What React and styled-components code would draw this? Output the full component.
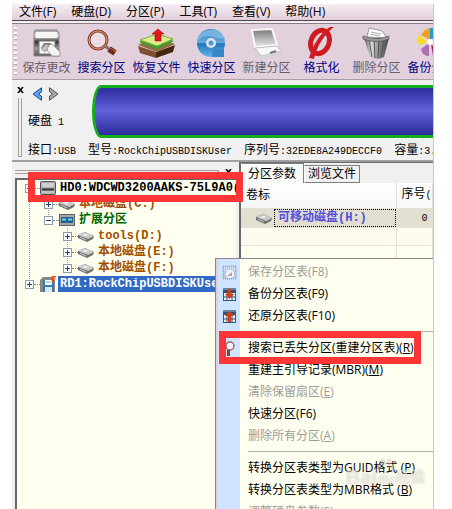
import React, { useState } from 'react'
import styled, { createGlobalStyle, css } from 'styled-components'

const GlobalStyle = createGlobalStyle`
    * { box-sizing: border-box; }
    body {
        margin: 0;
        background: #fff;
        overflow: hidden;
    }
    button {
        border: none;
        background: none;
        padding: 0;
        margin: 0;
        font: inherit;
        color: inherit;
    }
`

const uiFont = '"Open Sans", "Noto Sans CJK SC", sans-serif'
const monoFont = '"Liberation Mono", "Noto Sans CJK SC", monospace'

const Page = styled.div`
    height: 100vh;
    padding: 4px 18px 0 12px;
    font-family: ${uiFont};
    font-size: 12px;
    line-height: 16px;
    color: #000;
`

const Window = styled.main`
    position: relative;
    height: 100%;
    display: flex;
    flex-direction: column;
    overflow: hidden;
    background: #f0f0f0;
    border-right: 1px solid #c8c8c8;
`

const MenuBar = styled.nav`
    display: flex;
    height: 17px;
    flex: none;
    background: linear-gradient(to bottom, #f6eef3, #e2cdda);
    border-bottom: 1px solid #54404c;
`

const MenuButton = styled.button`
    padding: 0 8px 0 7px;
    line-height: 16px;
    white-space: nowrap;
`

const Toolbar = styled.div`
    display: flex;
    flex: none;
    margin-top: 2px;
    height: 57px;
    background: #e2d0dc;
    border-top: 1px solid #8c7c86;
    border-bottom: 1px solid #a8a0a4;
    overflow: hidden;
`

const ToolbarGrip = styled.div`
    width: 3px;
    margin: 3px 2px;
    flex: none;
    background: repeating-linear-gradient(to bottom, #fff 0 2px, #b8a8b2 2px 3px, transparent 3px 5px);
`

const ToolButton = styled.button`
    width: 55px;
    flex: none;
    display: flex;
    flex-direction: column;
    align-items: center;
    padding-top: 3px;
    white-space: nowrap;
    color: ${p => p.disabled ? '#66606a' : '#00007c'};

    svg { flex: none; }
`

const DiskPanel = styled.section`
    display: flex;
    flex: none;
    height: 82px;
    padding-top: 5px;
    border-bottom: 2px solid #a0a0a0;
    overflow: hidden;
`

const PanelGrip = styled.div`
    width: 16px;
    flex: none;
    display: flex;
    flex-direction: column;
    align-items: center;
    gap: 5px;
    padding: 2px 0 3px;
`

const GripBars = styled.div`
    flex: 1;
    width: 4px;
    border: 1px solid #a0a0a0;
    border-top: none;
`

const DiskBody = styled.div`
    flex: 1;
    min-width: 0;
    display: flex;
    flex-direction: column;
`

const DiskTop = styled.div`
    display: flex;
    height: 54px;
`

const DiskNav = styled.div`
    width: 64px;
    flex: none;
    display: flex;
    flex-direction: column;
    justify-content: space-between;
    padding: 2px 0 7px;
`

const Arrows = styled.div`
    display: flex;
    gap: 5px;
    padding-left: 4px;

    button { display: flex; }
`

const Cylinder = styled.div`
    flex: 1;
    border: 3px solid #16ac20;
    border-right: none;
    border-radius: 9px 0 0 9px / 27px 0 0 27px;
    background: linear-gradient(to bottom, #2c2c9c, #6262da 48%, #2c2c9c);
`

const DiskInfo = styled.div`
    display: flex;
    gap: 12px;
    padding-top: 4px;
    white-space: nowrap;
`

const Narrow = styled.span`
    font-family: ${monoFont};
    font-size: 10px;
`

const Lower = styled.div`
    flex: 1;
    min-height: 0;
    display: flex;
`

const TreePanel = styled.aside`
    width: 227px;
    flex: none;
    display: flex;
    flex-direction: column;
    padding: 3px 3px 0;
`

const TreeHeader = styled.div`
    display: flex;
    align-items: center;
    gap: 6px;
    height: 13px;
    padding-right: 4px;
`

const TreeBars = styled.div`
    flex: 1;
    height: 4px;
    border: 1px solid #a0a0a0;
    border-left: none;
`

const Tree = styled.ul`
    flex: 1;
    margin: 0;
    padding: 0 0 0 8px;
    list-style: none;
    background: #fffff0;
    border-top: 2px solid #696969;
    border-left: 2px solid #696969;
    overflow: hidden;
    font-family: ${monoFont};
    font-weight: bold;
`

const TreeRow = styled.li`
    display: flex;
    align-items: center;
    height: 16px;
    color: ${p => p.$color};
    white-space: nowrap;

    svg { flex: none; }
`

const dottedLine = css`
    background-image: repeating-linear-gradient(to bottom, #909090 0 1px, transparent 1px 2px);
    background-repeat: no-repeat;
    background-position: 4px 0;
`

const Guide = styled.span`
    width: 19px;
    height: 16px;
    flex: none;
    ${p => p.$line && css`
        ${dottedLine}
        background-size: 1px 100%;
    `}
`

const Toggle = styled.button`
    display: flex;
    align-items: center;
    height: 16px;
    ${dottedLine}
    background-size: 1px ${p => p.$last ? '50%' : '100%'};
`

const Dots = styled.span`
    width: 6px;
    flex: none;
    border-top: 1px dotted #808080;
`

const TreeLabel = styled.span`
    margin-left: 2px;
    padding-left: 2px;
    ${p => p.$selected && css`
        flex: 1;
        background: #316ac5;
        color: #fff;
    `}
`

const Details = styled.section`
    flex: 1;
    min-width: 0;
    display: flex;
    flex-direction: column;
    border-left: 2px solid #696969;
    background: #fffff0;
    overflow: hidden;
`

const Tabs = styled.div`
    display: flex;
    align-items: flex-end;
    height: 21px;
    flex: none;
    background: #f0f0f0;
    border-top: 1px solid #696969;
`

const Tab = styled.button`
    padding: 0 3px;
    height: ${p => p.$active ? 20 : 18}px;
    border: 1px solid #808080;
    border-left-color: #fff;
    ${p => p.$active && css`
        padding: 0 7px 0 6px;
        border-bottom: none;
        background: #fafafa;
    `}
`

const Table = styled.table`
    width: 100%;
    table-layout: fixed;
    border-collapse: collapse;

    th, td {
        padding: 0 0 0 5px;
        text-align: left;
        font-weight: normal;
        white-space: nowrap;
        overflow: hidden;
        border-right: 1px solid #e6e2d8;
        border-bottom: 1px solid #e6e2d8;
    }
    th {
        height: 25px;
        background: linear-gradient(to bottom, #fff, #f6f7f8);
    }
    td {
        height: 18px;
        background: #fffaf0;
    }
    th:first-child { width: 155px; }
    tr:last-child td { background: #fffff0; }
    tr.current td { background: #e3dfd0; }
    td + td { padding-left: 25px; }
`

const Volume = styled.span`
    display: flex;
    align-items: center;
    padding-left: 10px;
    color: #5050dc;
    font-family: ${monoFont};
    font-weight: bold;
`

const VolumeName = styled.span`
    flex: 1;
    margin-left: 2px;
    padding-left: 3px;
    border: 1px dotted #000;
`

const ContextMenu = styled.div`
    position: absolute;
    left: 203px;
    right: 0;
    top: 254px;
    padding: 2px 0 2px 2px;
    border-top: 1px solid #8c8290;
    border-left: 1px solid #8c8290;
    background: linear-gradient(to right, #e8ccd8 0 2px, #cfe5ff 2px 24px, #fffff0 24px);
`

const MenuItem = styled.button`
    display: flex;
    align-items: center;
    width: 100%;
    height: 22px;
    white-space: nowrap;
    color: ${p => p.disabled ? '#9c9c98' : '#000'};
`

const MenuIcon = styled.span`
    width: 22px;
    margin-right: 8px;
    flex: none;
    display: flex;
    justify-content: center;
`

const Separator = styled.hr`
    height: 1px;
    margin: 4px 0 5px 30px;
    border: none;
    background: #b4b4ac;
`

const Highlight = styled.div`
    position: absolute;
    left: ${p => p.$x}px;
    top: ${p => p.$y}px;
    width: ${p => p.$w}px;
    height: ${p => p.$h}px;
    border: 7px solid #fc3636;
    pointer-events: none;
`

const Watermark = styled.div`
    position: absolute;
    right: 8px;
    bottom: 20px;
    display: flex;
    align-items: flex-end;
    font-family: "Liberation Sans", "Noto Sans CJK SC", sans-serif;
    font-size: 20px;
    font-weight: bold;
    line-height: 24px;
    color: rgba(255, 255, 255, 0.5);
    text-shadow: 0 0 2px rgba(120, 120, 110, 0.4);
    pointer-events: none;
`

const Paw = styled.span`
    display: flex;
    flex-direction: column;
    align-items: center;
    font-size: 14px;
    line-height: 20px;

    svg { margin-bottom: -3px; }
`

const WatermarkCjk = styled.span`
    font-size: 15px;
`

const cjk = /([\u4e00-\u9fff]+)/

// half-width characters are set smaller so two of them fill one full-width cell
const Mixed = ({ children }) => children.split(cjk).map((part, i) =>
    cjk.test(part) ? part : <Narrow key={i}>{part}</Narrow>
)

const CloseIcon = () => (
    <svg width="7" height="6" viewBox="0 0 7 6"><path d="M1 0l5 6M6 0L1 6" stroke="#000" strokeWidth="1.6" /></svg>
)

const ArrowIcon = ({ flip, fill, stroke }) => (
    <svg width="11" height="14" viewBox="0 0 11 14">
        <path d="M9.5 .8v4L6.5 7l3 2.3v4L1 7z" transform={flip ? 'rotate(180 5.5 7)' : undefined} fill={fill} stroke={stroke} />
    </svg>
)

const toolIcons = {
    save: <>
        <defs><linearGradient id="saveG" x2="0" y2="1"><stop stopColor="#999" /><stop offset=".22" stopColor="#eee" /><stop offset=".45" stopColor="#333" /><stop offset=".7" stopColor="#999" /><stop offset="1" stopColor="#555" /></linearGradient></defs>
        <path d="M7 3h22l2 3v23H6V6z" fill="url(#saveG)" stroke="#888" />
        <rect x="8" y="5" width="21" height="6" fill="#f4f4f4" />
        <rect x="11" y="14" width="16" height="13" fill="#f8f8f8" stroke="#777" />
        <path d="M13 21l3-5h7l-3 8z" fill="#777" />
        <path d="M13 22l5-5 5 2-6 6z" fill="#c0c0c0" stroke="#888" strokeWidth=".6" />
        <path d="M21 18l3-1 8 8v4h-8l-5-6z" fill="#f4f4f4" stroke="#888" strokeWidth=".8" />
    </>,
    search: <>
        <circle cx="15" cy="13" r="9" fill="#eadde4" stroke="#8c4430" strokeWidth="3" /><circle cx="15" cy="13" r="9" fill="none" stroke="#dc9876" />
        <path d="M22 19l4 3" stroke="#777" strokeWidth="3" /><path d="M26 22l6 4" stroke="#702818" strokeWidth="6" /><path d="M27 21l6 4" stroke="#c86848" />
    </>,
    restore: <>
        <path d="M0 19l18 6v6L2 26z" fill="#7c5030" /><path d="M18 25l19-7-2 7-17 6z" fill="#46260e" />
        <path d="M0 18l17-8 20 7-18 8z" fill="#8c7040" /><path d="M1 15l17-7 18 6-17 8z" fill="#449c30" /><path d="M2 13l17-6 16 5-16 7z" fill="#e0ec88" stroke="#74b43c" />
        <path d="M17 14V7h-3l6-5 6 5h-3v7z" fill="#e01818" stroke="#981010" strokeWidth=".6" />
    </>,
    quick: <>
        <defs><linearGradient id="quickG" x2="0" y2="1"><stop stopColor="#347cba" /><stop offset=".5" stopColor="#64acdc" /><stop offset=".52" stopColor="#2474bc" /><stop offset="1" stopColor="#60b4e8" /></linearGradient></defs>
        <circle cx="18" cy="16" r="14" fill="url(#quickG)" /><path d="M20 22h11v8H19z" fill="#3688c8" /><path d="M4 14C14 3 25 14 32 11L30 8C25 0 8 0 4 14z" fill="#8cc4ec" opacity=".7" />
        <circle cx="18" cy="16" r="5" fill="#d8e4f0" /><circle cx="18" cy="16" r="2.5" fill="#5098d0" />
    </>,
    create: <>
        <defs><linearGradient id="lapG" x2="0" y2="1"><stop stopColor="#777" /><stop offset="1" stopColor="#e8e8e8" /></linearGradient></defs>
        <path d="M4 3l20-1 5 16-22 2z" fill="url(#lapG)" stroke="#f8f8f8" strokeWidth="2" />
        <path d="M7 21l22-2 4 5-20 5z" fill="#f8f8f8" stroke="#aaa" strokeWidth=".7" /><path d="M13 29l20-5v3l-20 5-6-9z" fill="#d4d4d4" /><path d="M22 26l6-2" stroke="#777" strokeWidth="2" />
    </>,
    format: <>
        <ellipse cx="17" cy="15" rx="9" ry="12" transform="rotate(22 17 15)" fill="none" stroke="#cc1c22" strokeWidth="5" />
        <path d="M31 0C22 7 14 18 11 32l-5-1C10 18 17 6 27 0z" fill="#d01c20" />
    </>,
    remove: <>
        <defs><linearGradient id="binG"><stop stopColor="#555" /><stop offset=".3" stopColor="#ddd" /><stop offset=".6" stopColor="#888" /><stop offset="1" stopColor="#444" /></linearGradient></defs>
        <path d="M9 10L11 1l13 3 5 7z" fill="#fff" stroke="#999" /><path d="M13 5l10 2M12 7l10 2" stroke="#aaa" />
        <path d="M6 11h25l-5 19q-7 4-14 0z" fill="url(#binG)" /><path d="M11 12l3 18M16 12l1 19M21 12l-1 19M26 12l-3 18" stroke="#555" />
        <path d="M5 9q13 5 26 0v3q-13 5-26 0z" fill="#999" stroke="#555" strokeWidth=".7" />
    </>,
    backup: <>
        <path d="M17 13L8 8q3-6 9-7z" fill="#f0a020" /><path d="M17 13V1q9-1 12 6z" fill="#2898d0" /><path d="M14 15L6 8q-4 7 1 10z" fill="#f8dc20" />
        <path d="M16 16l-8 6q1 7 8 7z" fill="#b070b0" /><path d="M19 15l12-6q4 10-4 14z" fill="#503078" /><path d="M18 17l9 9-7 3z" fill="#9c2c80" /><circle cx="17" cy="15" r="3" fill="#fff" />
    </>,
}

const ToolIcon = ({ name }) => <svg width="38" height="33" viewBox="0 0 38 33">{toolIcons[name]}</svg>

const ToggleIcon = ({ open }) => (
    <svg width="9" height="9" viewBox="0 0 9 9">
        <rect x=".5" y=".5" width="8" height="8" fill="#fff" stroke="#8c9cb0" />
        <path d={open ? 'M2 4.5h5' : 'M2 4.5h5M4.5 2v5'} stroke="#204080" />
    </svg>
)

const treeIcons = {
    disk: <><rect x=".5" y="1.5" width="15" height="13" rx="1" fill="#aaa" stroke="#555" /><path d="M2 4h12M2 6h12" stroke="#f4f4f4" /><path d="M2 9.5h12" stroke="#333" strokeWidth="2" /><path d="M2 12h12" stroke="#ddd" /></>,
    volume: <><path d="M0 7l7-3 9 4-1 3-6 3-9-4z" fill="#707070" /><path d="M0 7l7-3 9 4-6 3z" fill="#c8c8c8" /><path d="M4 7l4-1 2 1-3 1z" fill="#fafafa" /><path d="M2 9l6 3" stroke="#ccc" /></>,
    extended: <><rect x=".5" y="2.5" width="15" height="11" fill="#a8a8a8" stroke="#606060" /><rect x="2" y="5" width="12" height="6" fill="#246090" /><path d="M3 7.5h4M9 7.5h4" stroke="#68d8e8" strokeWidth="2" /></>,
    floppy: <><path d="M0 4l3-3h9v3h3v12H0z" fill="#888" /><rect x="3" y="4" width="11" height="12" fill="#3c78b4" /><rect x="5" y="4" width="7" height="5" fill="#fff" /><path d="M6 6h5" stroke="#6aa" /><rect x="5" y="11" width="7" height="5" fill="#d8e8f0" /><path d="M12.5 6V.8H16M12.5 3H15" stroke="#f04010" strokeWidth="1.5" fill="none" /></>,
}

const TreeIcon = ({ name }) => <svg width="16" height="16" viewBox="0 0 16 16">{treeIcons[name]}</svg>

const tableGrid = <><rect x="1" y="1" width="13" height="13" fill="#30547c" /><path d="M1 2h13" stroke="#a0b8d0" /><rect x="2" y="6" width="11" height="7" fill="#f0f0f4" /><path d="M2 10h11M5 6v7M10 6v7" stroke="#30547c" /></>

const menuIcons = {
    save: <g opacity=".6"><rect x="1" y="1" width="13" height="13" fill="#a8b8d4" stroke="#4068a0" strokeDasharray="1 1" /><path d="M2 3h11M2 5h11" stroke="#fff" strokeDasharray="1 1" /><circle cx="8" cy="9" r="4" fill="#fff" /><path d="M5 11l5-4v4z" fill="#e06040" /></g>,
    backup: <>{tableGrid}<path d="M6 2h3v5h3l-4.5 5L3 7h3z" fill="#d04018" /></>,
    restore: <>{tableGrid}<path d="M6 13h3V7h3L7.5 2 3 7h3z" fill="#d04018" /></>,
    search: <><circle cx="8" cy="5" r="4" fill="#edf3fa" stroke="#a06458" strokeWidth="1.5" /><path d="M6.5 9v6" stroke="#804830" strokeWidth="3" /></>,
}

const menus = ['文件(F)', '硬盘(D)', '分区(P)', '工具(T)', '查看(V)', '帮助(H)']

const tools = [
    { icon: 'save', label: '保存更改', disabled: true },
    { icon: 'search', label: '搜索分区' },
    { icon: 'restore', label: '恢复文件' },
    { icon: 'quick', label: '快速分区' },
    { icon: 'create', label: '新建分区', disabled: true },
    { icon: 'format', label: '格式化' },
    { icon: 'remove', label: '删除分区', disabled: true },
    { icon: 'backup', label: '备份分区' },
]

const diskInfo = ['接口:USB', '型号:RockChipUSBDISKUser', '序列号:32EDE8A249DECCF0', '容量:3.8GB']

// guides: which ancestor columns keep their dotted line running past the row
const nodes = [
    { guides: [], icon: 'disk', label: 'HD0:WDCWD3200AAKS-75L9A0(', color: '#000', open: true },
    { guides: [true], icon: 'volume', label: '本地磁盘(C:)', color: '#a05000' },
    { guides: [true], icon: 'extended', label: '扩展分区', color: '#006400', open: true, last: true },
    { guides: [true, false], icon: 'volume', label: 'tools(D:)', color: '#a05000' },
    { guides: [true, false], icon: 'volume', label: '本地磁盘(E:)', color: '#a05000' },
    { guides: [true, false], icon: 'volume', label: '本地磁盘(F:)', color: '#a05000', last: true },
    { guides: [], icon: 'floppy', label: 'RD1:RockChipUSBDISKUser', color: '#000', selected: true, last: true },
]

const contextItems = [
    { label: '保存分区表(F8)', icon: 'save', disabled: true },
    { label: '备份分区表(F9)', icon: 'backup' },
    { label: '还原分区表(F10)', icon: 'restore' },
    null,
    { label: '搜索已丢失分区(重建分区表)', hotkey: 'R', icon: 'search' },
    { label: '重建主引导记录(MBR)', hotkey: 'M' },
    { label: '清除保留扇区', hotkey: 'E', disabled: true },
    { label: '快速分区(F6)' },
    { label: '删除所有分区', hotkey: 'A', disabled: true },
    null,
    { label: '转换分区表类型为GUID格式 ', hotkey: 'P' },
    { label: '转换分区表类型为MBR格式 ', hotkey: 'B' },
    { label: '调整硬盘参数', hotkey: 'S', disabled: true },
]

const App = () => {
    const [tab, setTab] = useState(0)

    return (
        <Page>
            <GlobalStyle />
            <Window>
                <MenuBar>
                    {menus.map(m => <MenuButton key={m}>{m}</MenuButton>)}
                </MenuBar>
                <Toolbar>
                    <ToolbarGrip />
                    {tools.map(t => (
                        <ToolButton key={t.label} disabled={t.disabled}>
                            <ToolIcon name={t.icon} />
                            {t.label}
                        </ToolButton>
                    ))}
                </Toolbar>
                <DiskPanel>
                    <PanelGrip>
                        <CloseIcon />
                        <GripBars />
                    </PanelGrip>
                    <DiskBody>
                        <DiskTop>
                            <DiskNav>
                                <Arrows>
                                    <button aria-label="上一个"><ArrowIcon fill="#58a8f0" stroke="#184880" /></button>
                                    <button aria-label="下一个"><ArrowIcon flip fill="#a8a8a8" stroke="#505050" /></button>
                                </Arrows>
                                <span><Mixed>硬盘 1</Mixed></span>
                            </DiskNav>
                            <Cylinder />
                        </DiskTop>
                        <DiskInfo>
                            {diskInfo.map(d => <span key={d}><Mixed>{d}</Mixed></span>)}
                        </DiskInfo>
                    </DiskBody>
                </DiskPanel>
                <Lower>
                    <TreePanel>
                        <TreeHeader>
                            <TreeBars />
                            <CloseIcon />
                        </TreeHeader>
                        <Tree>
                            {nodes.map(n => (
                                <TreeRow key={n.label} $color={n.color}>
                                    {n.guides.map((line, i) => <Guide key={i} $line={line} />)}
                                    <Toggle aria-label={n.label} $last={n.last}><ToggleIcon open={n.open} /></Toggle>
                                    <Dots />
                                    <TreeIcon name={n.icon} />
                                    <TreeLabel $selected={n.selected}>{n.label}</TreeLabel>
                                </TreeRow>
                            ))}
                        </Tree>
                    </TreePanel>
                    <Details>
                        <Tabs>
                            <Tab $active={tab === 0} onClick={() => setTab(0)}>分区参数</Tab>
                            <Tab $active={tab === 1} onClick={() => setTab(1)}>浏览文件</Tab>
                        </Tabs>
                        <Table>
                            <thead>
                                <tr><th>卷标</th><th><Mixed>序号(状态)</Mixed></th></tr>
                            </thead>
                            <tbody>
                                <tr className="current">
                                    <td><Volume><TreeIcon name="volume" /><VolumeName>可移动磁盘(H:)</VolumeName></Volume></td>
                                    <td><Mixed>0</Mixed></td>
                                </tr>
                                <tr><td /><td /></tr>
                                <tr><td /><td /></tr>
                            </tbody>
                        </Table>
                    </Details>
                </Lower>
                <ContextMenu>
                    {contextItems.map((item, i) => item ? (
                        <MenuItem key={i} disabled={item.disabled}>
                            <MenuIcon>
                                {item.icon && <svg width="15" height="15" viewBox="0 0 15 15">{menuIcons[item.icon]}</svg>}
                            </MenuIcon>
                            <span>{item.label}{item.hotkey && <>(<u>{item.hotkey}</u>)</>}</span>
                        </MenuItem>
                    ) : <Separator key={i} />)}
                </ContextMenu>
                <Highlight $x={16} $y={168} $w={215} $h={30} />
                <Highlight $x={207} $y={327} $w={202} $h={33} />
                <Watermark>
                    <span>Bai</span>
                    <Paw>
                        <svg width="18" height="14" viewBox="0 0 18 14">
                            <g fill="rgba(190,190,180,.45)"><ellipse cx="6" cy="4" rx="2.5" ry="3.5" /><ellipse cx="12" cy="4" rx="2.5" ry="3.5" /><ellipse cx="2" cy="9" rx="2" ry="3" /><ellipse cx="16" cy="9" rx="2" ry="3" /></g>
                        </svg>
                        <span>du</span>
                    </Paw>
                    <WatermarkCjk>经验</WatermarkCjk>
                </Watermark>
            </Window>
        </Page>
    )
}

export default App
